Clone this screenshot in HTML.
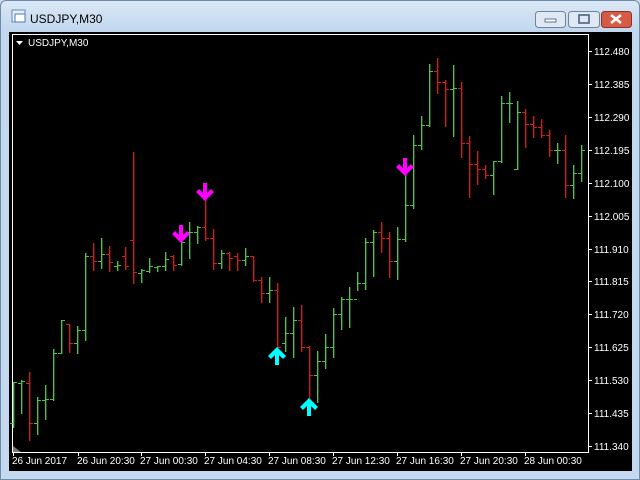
<!DOCTYPE html>
<html><head><meta charset="utf-8"><style>
html,body{margin:0;padding:0;width:640px;height:480px;overflow:hidden;background:#c9dcf0;font-family:"Liberation Sans",sans-serif}
#win{position:absolute;left:0;top:0;width:638px;height:478px;border:1px solid #6f8aa8;border-radius:6px 6px 0 0;background:linear-gradient(#dbe8f6,#c2d7ee 30px,#c4d9ef)}
</style></head><body>
<div id="win"></div>
<svg width="640" height="480" style="position:absolute;left:0;top:0" xmlns="http://www.w3.org/2000/svg" font-family="Liberation Sans, sans-serif">
<rect x="12" y="10" width="13" height="12" fill="#e8f0fa" stroke="#6a88b0"/>
<rect x="15" y="14" width="10" height="8" fill="#fff" stroke="#4a78b8"/>
<text x="30" y="23" font-size="12" fill="#000">USDJPY,M30</text>
<rect x="535.5" y="11.5" width="30" height="16" rx="3" fill="#dfe8f3" stroke="#70839c"/>
<rect x="545" y="19" width="11" height="3" fill="#fff" stroke="#3d5a80" stroke-width="0.8"/>
<rect x="568.5" y="11.5" width="31" height="16" rx="3" fill="#dfe8f3" stroke="#70839c"/>
<rect x="579" y="15" width="10" height="8" fill="none" stroke="#3d5a80" stroke-width="1.5"/>
<rect x="601.5" y="11.5" width="30" height="16" rx="3" fill="#d65b45" stroke="#8a3326"/>
<path d="M611 15 L621 23 M621 15 L611 23" stroke="#fff" stroke-width="2.5"/>
<rect x="9" y="32" width="623" height="439" fill="#000"/>
<path d="M12.5 452 V34.5 H588.5 V452.5 H12" stroke="#fff" fill="none"/>
<text x="28" y="46" font-size="10" fill="#fff">USDJPY,M30</text>
<path d="M16 41 h7 l-3.5 4z" fill="#fff"/>
<path d="M13 446 l8 6 h-8z" fill="#777"/>
<g id="scale" font-size="10" fill="#fff"></g>
<g id="bars" stroke-width="1" shape-rendering="crispEdges"></g>
<g id="arr"></g>
</svg>
<script>
var S='http://www.w3.org/2000/svg';
function el(p,t,a,txt){var e=document.createElementNS(S,t);for(var k in a)e.setAttribute(k,a[k]);if(txt)e.textContent=txt;p.appendChild(e);return e;}
var sc=document.getElementById('scale');
var prices=['112.480','112.385','112.290','112.195','112.100','112.005','111.910','111.815','111.720','111.625','111.530','111.435','111.340'];
for(var i=0;i<prices.length;i++){var y=Math.round(51+i*(395/12));el(sc,'line',{x1:588,x2:592,y1:y+0.5,y2:y+0.5,stroke:'#fff'});el(sc,'text',{x:594,y:y+4},prices[i]);}
var dts=[[13,'26 Jun 2017'],[78,'26 Jun 20:30'],[141,'27 Jun 00:30'],[205,'27 Jun 04:30'],[269,'27 Jun 08:30'],[333,'27 Jun 12:30'],[397,'27 Jun 16:30'],[461,'27 Jun 20:30'],[525,'28 Jun 00:30']];
dts.forEach(function(d){el(sc,'line',{x1:d[0]+0.5,x2:d[0]+0.5,y1:452,y2:456,stroke:'#fff'});el(sc,'text',{x:d[0]-1,y:464},d[1]);});
var B=[[13,'G',382,427,423,382],[21,'G',380,413,383,381],[29,'R',372,440,383,423],[37,'G',397,434,423,400],[45,'G',385,419,400,399],[53,'G',349,400,399,353],[61,'G',320,353,353,320],[69,'R',324,352,324,343],[77,'G',326,353,343,330],[85,'G',253,340,330,256],[93,'R',243,270,256,261],[101,'G',238,268,261,254],[109,'R',246,271,254,262],[117,'G',261,270,266,265],[125,'R',247,269,256,266],[133,'R',152,283,240,272],[141,'G',269,282,273,270],[149,'G',258,272,271,266],[157,'G',266,271,267,266],[165,'G',252,270,266,259],[173,'R',255,270,256,265],[181,'G',242,265,264,242],[189,'G',222,258,232,232],[197,'G',226,243,232,227],[205,'R',200,240,227,238],[213,'R',229,269,238,263],[221,'G',250,268,263,253],[229,'R',252,270,253,258],[237,'R',253,270,256,260],[245,'G',248,265,260,256],[253,'R',256,281,256,280],[261,'R',277,302,280,293],[269,'G',277,302,293,290],[277,'R',283,348,290,347],[285,'G',317,351,343,333],[293,'G',307,357,333,320],[301,'R',305,351,320,347],[309,'R',346,400,347,375],[317,'G',351,402,375,361],[325,'G',334,368,361,347],[333,'G',308,357,347,314],[341,'G',297,329,314,299],[349,'G',287,327,299,299],[357,'G',272,290,299,283],[365,'G',238,289,283,242],[373,'G',230,276,242,232],[381,'R',222,252,232,238],[389,'R',232,277,238,261],[397,'G',227,279,261,239],[405,'G',175,241,239,205],[413,'G',135,208,205,145],[421,'G',116,149,145,125],[429,'G',64,126,125,71],[437,'R',58,93,71,82],[445,'R',80,126,82,89],[453,'G',65,136,89,88],[461,'R',82,157,88,143],[469,'R',136,197,143,164],[477,'R',151,184,164,169],[485,'R',165,178,169,175],[493,'G',161,194,175,161],[501,'G',96,162,161,103],[509,'G',92,122,103,103],[517,'G',101,169,169,112],[525,'R',109,147,112,124],[533,'R',116,137,124,127],[541,'R',119,137,127,135],[549,'R',130,156,135,150],[557,'G',143,163,150,150],[565,'R',135,197,150,185],[573,'G',165,198,185,173],[581,'G',145,181,173,150]];
var g=document.getElementById('bars');
B.forEach(function(b){var c=b[1]=='G'?'#4cc44c':'#d41c1c';
el(g,'rect',{x:b[0],y:b[2],width:1,height:b[3]-b[2]+1,fill:c});
el(g,'rect',{x:b[0]+1,y:b[2],width:1,height:b[3]-b[2]+1,fill:c,'fill-opacity':0.35});
el(g,'rect',{x:b[0]-3,y:b[4],width:3,height:1,fill:c});
el(g,'rect',{x:b[0]+1,y:b[5],width:3,height:1,fill:c});});
var a=document.getElementById('arr');
function down(cx,tip){el(a,'path',{d:'M'+(cx-2)+' '+(tip-18)+' h4 v10 l4 -4 l3 3 l-9 9 l-9 -9 l3 -3 l4 4z',fill:'#ff00ff'});}
function up(cx,tip){el(a,'path',{d:'M'+(cx-2)+' '+(tip+18)+' h4 v-10 l4 4 l3 -3 l-9 -9 l-9 9 l3 3 l4 -4z',fill:'#00ffff'});}
down(181,243);down(205,201);down(405,176);up(277,347);up(309,398);
</script>
</body></html>
